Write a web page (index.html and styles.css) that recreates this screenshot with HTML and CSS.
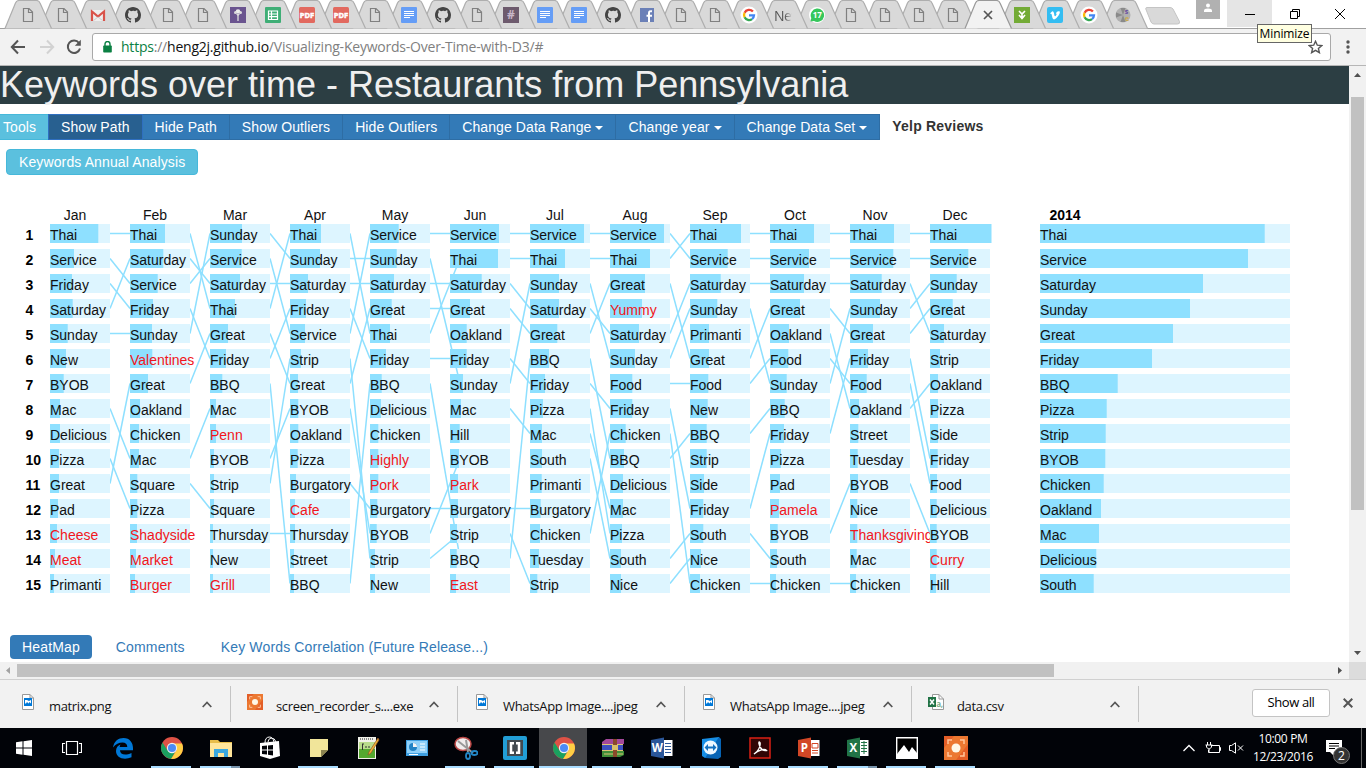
FILE: index.html
```html
<!DOCTYPE html>
<html lang="en">
<head>
<meta charset="utf-8">
<title>Keywords over time</title>
<link rel="stylesheet" href="styles.css">
</head>
<body>
<div class="tabstrip">
  <div class="tabs" id="tabs"></div>
  <svg class="newtab" width="36" height="18" viewBox="0 0 36 18"><path d="M2 .5H25Q27 .5 28 2L34.5 14.500Q35 17 32.500 17H9Q7 17 6 15L.8 2Q.5.5 2 .5Z" fill="#d9d9d9" stroke="#c4c4c4"/></svg>
  <div class="profile"><svg width="10" height="10" viewBox="0 0 10 10" fill="#fff"><circle cx="5" cy="2.500" r="2"/><path d="M1 9V7.500Q1 5.500 5 5.500T9 7.500V9Z"/></svg></div>
  <div class="winbtn min"><svg width="10" height="12" viewBox="0 0 10 12"><path d="M0 6.500H10" stroke="#000"/></svg></div>
  <div class="winbtn"><svg width="10" height="10" viewBox="0 0 10 10" fill="none" stroke="#000"><path d="M.5 2.500H7.500V9.500H.5ZM2.500 2.500V.5H9.500V7.500H7.500"/></svg></div>
  <div class="winbtn"><svg width="10" height="10" viewBox="0 0 10 10" stroke="#000"><path d="M0 0L10 10M10 0L0 10"/></svg></div>
</div>
<div class="toolbar">
  <svg class="back" width="16" height="16" viewBox="0 0 16 16" fill="none" stroke="#555" stroke-width="2"><path d="M15 8H2M8 1.500L1.800 8L8 14.500"/></svg>
  <svg class="fwd" width="16" height="16" viewBox="0 0 16 16" fill="none" stroke="#d2d2d2" stroke-width="2"><path d="M1 8H14M8 1.500L14.200 8L8 14.500"/></svg>
  <svg class="reload" width="16" height="16" viewBox="0 0 16 16" fill="none" stroke="#555" stroke-width="2"><path d="M13 4A6.200 6.200 0 1 0 14 9.500"/><path d="M14.800 .8V6.800H8.800Z" fill="#555" stroke="none"/></svg>
  <div class="omnibox">
    <svg class="lock" width="9" height="12" viewBox="0 0 9 12"><path d="M2 5V3A2.500 2.500 0 0 1 7 3V5" fill="none" stroke="#0b8043" stroke-width="1.400"/><rect x=".2" y="4.500" width="8.600" height="7" rx=".8" fill="#0b8043"/></svg>
    <span class="url"><span class="scheme">https</span>://<span class="host">heng2j.github.io</span>/Visualizing-Keywords-Over-Time-with-D3/#</span>
    <svg class="star" width="15" height="14" viewBox="0 0 15 14"><path d="M7.500 1.300L9.300 5.200L13.700 5.600L10.400 8.400L11.400 12.700L7.500 10.400L3.600 12.700L4.600 8.400L1.300 5.600L5.700 5.200Z" fill="none" stroke="#555" stroke-width="1.400"/></svg>
  </div>
  <svg class="menu" width="4" height="14" viewBox="0 0 4 14" fill="#555"><circle cx="2" cy="2" r="1.700"/><circle cx="2" cy="7" r="1.700"/><circle cx="2" cy="12" r="1.700"/></svg>
  <div class="tooltip">Minimize</div>
</div>
<div class="viewport">
  <div class="page">
    <h1>Keywords over time - Restaurants from Pennsylvania</h1>
    <div class="tools">
      <span class="btn info first">Tools</span><span class="btn active">Show Path</span><span class="btn">Hide Path</span><span class="btn">Show Outliers</span><span class="btn">Hide Outliers</span><span class="btn">Change Data Range<i class="caret"></i></span><span class="btn">Change year<i class="caret"></i></span><span class="btn">Change Data Set<i class="caret"></i></span>
      <b class="dataset">Yelp Reviews</b>
    </div>
    <div class="btn info annual">Keywords Annual Analysis</div>
    <svg class="chart" id="chart" width="1349" height="420"></svg>
    <div class="nav"><span class="pill">HeatMap</span><span>Comments</span><span>Key Words Correlation (Future Release...)</span></div>
  </div>
  <div class="vscroll"><svg width="17" height="17"><path d="M5 11L8.500 7L12 11Z" fill="#505050"/></svg><div class="vthumb"></div><svg width="17" height="17"><path d="M5 6L8.500 10L12 6Z" fill="#505050"/></svg></div>
  <div class="hscroll"><svg width="17" height="17"><path d="M10 5L6 8.500L10 12Z" fill="#a3a3a3"/></svg><div class="hthumb"></div><svg width="17" height="17"><path d="M6 5L10 8.500L6 12Z" fill="#505050"/></svg></div>
  <div class="corner"></div>
</div>
<div class="downloads" id="downloads"></div>
<div class="taskbar">
  <div class="apps" id="apps"></div>
  <div class="tray">
    <svg width="12" height="8" viewBox="0 0 12 8" fill="none" stroke="#fff" stroke-width="1.300"><path d="M.5 7L6 1.500L11.500 7"/></svg>
    <svg class="battery" width="16" height="12" viewBox="0 0 16 12" fill="none" stroke="#fff"><path d="M7 3.500H14.500V10.500H3.500V8M14.500 5.500H15.500V8.500H14.500M2.500 0V3M5.500 0V3M.5 3H7.500M1.500 3V5Q4 9 6.500 5V3M4 7V10"/></svg>
    <svg class="speaker" width="15" height="12" viewBox="0 0 15 12" fill="none" stroke="#fff"><path d="M.5 3.500H2.500L6.500 .8V11.200L2.500 8.500H.5Z"/><path d="M9 3.500L14 8.500M14 3.500L9 8.500"/></svg>
    <div class="clock"><span>10:00 PM</span><span>12/23/2016</span></div>
    <div class="action"><svg width="17" height="16" viewBox="0 0 17 16"><path d="M0 0H16V12H8V16L4 12H0Z" fill="#fff"/><path d="M3 3.500H13M3 6H13M3 8.500H9" stroke="#000"/></svg><span class="badge">2</span></div>
    <div class="desk"></div>
  </div>
</div>
<script src="app.js"></script>
</body>
</html>
```
FILE: styles.css
```css
*{box-sizing:border-box}
body{margin:0;width:1366px;height:768px;overflow:hidden;background:#fff;font-family:"Liberation Sans",Arial,sans-serif;font-size:14px;display:flex;flex-direction:column}
svg{display:block;flex:none}
.tabstrip{height:28px;display:flex;background:#fff}
.tabs{display:flex;padding-left:10px}
.tab{width:34px;height:28px;position:relative;display:flex;align-items:center;justify-content:center;padding-top:2px}
.tab.wide{width:35px}
.tab.active{width:36px}
.tab.after{width:32px}
.tab .shape{position:absolute;left:-6px;top:0;overflow:visible}
.tab .icon{position:relative}
.tabtext{position:relative;width:18px;overflow:hidden;font:14px "Open Sans",sans-serif;color:#555;letter-spacing:-.6px;-webkit-mask-image:linear-gradient(90deg,#000 60%,transparent)}
.newtab{margin:7px 0 0 5px}
.profile{width:24px;height:19px;background:#b1b1b1;margin-left:15px;display:flex;justify-content:center;padding-top:3px}
.winbtn{width:45px;height:27px;display:flex;align-items:center;justify-content:center}
.winbtn.min{margin-left:7px;background:#e5e5e5}
.winbtn:last-child{width:46px}
.toolbar{height:38px;background:#f2f2f2;border-top:1px solid #a0a0a0;border-bottom:1px solid #b6b6b6;display:flex;align-items:center;position:relative}
.back{margin-left:10px}
.fwd{margin-left:13px}
.reload{margin-left:11px}
.omnibox{width:1239px;height:28px;margin-left:10px;background:#fff;border:1px solid #a9a9a9;border-radius:3px;display:flex;align-items:center}
.lock{margin-left:10px}
.url{margin-left:9px;margin-top:-1px;font:14px "Open Sans",sans-serif;color:#808080;white-space:nowrap;letter-spacing:-.22px}
.scheme{color:#0b8043}
.host{color:#111}
.star{margin-left:auto;margin-right:7px}
.menu{margin-left:15px}
.tooltip{position:absolute;left:1257px;top:-5px;width:55px;height:19px;border:1px solid #666;background:#ffffe1;font:12px/17px "Open Sans",sans-serif;letter-spacing:-.1px;text-align:center;color:#000}
.viewport{height:613px;display:grid;grid-template-columns:1349px 17px;grid-template-rows:596px 17px}
.page{overflow:hidden;background:#fff}
h1{margin:0;height:38px;background:#2c3e43;color:#efefef;font-size:36px;font-weight:400;line-height:38px;white-space:nowrap}
.tools{display:flex;margin-top:10px;height:26px}
.btn{height:26px;line-height:24px;padding:0 12px;border:1px solid #2e6da4;background:#337ab7;color:#fff;margin-left:-1px;white-space:nowrap;letter-spacing:.09px}
.btn.info{background:#5bc0de;border-color:#46b8da}
.btn.first{padding:0 11px 0 3px;margin-left:-1px;width:50px}
.btn.active{background:#286090;border-color:#2f6fc0;position:relative}
.caret{display:inline-block;border:4px solid transparent;border-top-color:#fff;border-bottom:0;margin-left:4px;vertical-align:2px}
.dataset{color:#333;margin-left:12px;line-height:24px;letter-spacing:.2px}
.btn.annual{display:inline-block;vertical-align:top;margin:9px 0 0 6px;border-radius:4px;letter-spacing:.12px}
.chart{font-size:14px;margin-top:24px}
.cell{fill:#ddf5ff}
.bar{fill:#8ee0ff}
.link{stroke:#8ee0ff;stroke-width:1.500}
.word,.month{fill:#111}
.month{text-anchor:middle}
.outlier{fill:#f11520}
.bold{font-weight:700;fill:#000}
.nav{display:flex;height:24px;line-height:24px;margin:16px 0 0 10px;color:#337ab7;letter-spacing:.15px}
.nav span{padding:0 12px}
.nav span+span{margin-left:12px}
.nav .pill{background:#337ab7;color:#fff;border-radius:4px}
.vscroll,.hscroll{background:#f1f1f1;display:flex;justify-content:space-between}
.vscroll{flex-direction:column}
.vthumb{width:13px;height:413px;margin:14px 0 auto 2px;background:#c1c1c1}
.hthumb{width:1037px;height:13px;margin:2px auto 0 0;background:#c1c1c1}
.corner{background:#dcdcdc}
.downloads{height:49px;border-top:1px solid #d0d0d0;background:#f2f2f2;display:flex;padding-top:6px}
.item{width:227px;height:36px;border-right:1px solid #c4c4c4;display:flex;padding:0 18px 0 16px;font:13px/18px "Open Sans",sans-serif;color:#111;letter-spacing:-.35px}
.item:first-child{width:231px;padding-left:20px}
.item .icon{margin-top:8px;width:16px}
.item .name{margin:11px auto 0 13px;white-space:nowrap}
.item .up{margin-top:15px}
.showall{margin:3px 0 0 113px;width:78px;height:28px;border:1px solid #c4c4c4;border-radius:3px;background:#fff;text-align:center;font:13px/25px "Open Sans",sans-serif;letter-spacing:-.4px}
.close{margin:12px 0 0 13px}
.taskbar{height:40px;background:#010308;display:flex;justify-content:space-between}
.apps{display:flex}
.app{width:49px;height:40px;display:flex;align-items:center;justify-content:center;position:relative}
.app.sys{width:48px}
.app.gap{margin-left:2px}
.app.current{background:linear-gradient(#47484b,#47484b) 0 0/48px 100% no-repeat}
.app.run::after{content:"";position:absolute;left:4px;bottom:0;width:40px;height:2px;background:#a9dcff}
.app.current::after{left:0;width:48px}
.app.multi::after{background:linear-gradient(90deg,#a9dcff 31px,#7894ac 31px)}
.tray{display:flex;align-items:center;color:#fff}
.battery{margin-left:10px}
.speaker{margin-left:8px}
.clock{width:76px;margin-left:1px;display:flex;flex-direction:column;align-items:center;font:12px/18px "Open Sans",sans-serif;letter-spacing:-.35px;white-space:nowrap;margin-top:-1px}
.action{width:30px;height:40px;margin-left:5px;position:relative;padding-top:12px}
.badge{position:absolute;left:7px;top:19px;width:17px;height:17px;border-radius:50%;background:#333;border:1px solid #777;font:12px/15px "Open Sans",sans-serif;text-align:center}
.desk{width:5px;height:40px;border-left:1px solid #666;margin-left:5px}
```
FILE: app.js
```javascript
const svg = (w, h, body, box) => `<svg class="icon" width="${w}" height="${h}" viewBox="${box || `0 0 ${w} ${h}`}">${body}</svg>`;
const label = (t, x, y, size, fill, extra = '') => `<text x="${x}" y="${y}" font-size="${size}" fill="${fill}" text-anchor="middle" font-weight="700" font-family="Open Sans,sans-serif" ${extra}>${t}</text>`;

const tabIcons = {
  page: svg(16, 16, '<path d="M3.500 1.500H9L12.500 5V14.500H3.500ZM8.500 1.500V5.500H12.500" fill="none" stroke="#808080" stroke-width="1.200"/>'),
  gmail: svg(16, 16, '<path d="M2 3H14V14H2Z" fill="#eee"/><path d="M2 14V4.500L8 9.500L14 4.500V14" fill="none" stroke="#d9534a" stroke-width="2.200"/><path d="M3.500 13.500L8 10L12.500 13.500" fill="none" stroke="#ccc"/>'),
  github: svg(16, 16, '<path fill="#444" d="M8 0C3.580 0 0 3.580 0 8c0 3.540 2.290 6.530 5.470 7.590.4.070.55-.17.55-.38 0-.19-.01-.82-.01-1.490-2.010.37-2.530-.49-2.690-.94-.09-.23-.48-.94-.82-1.130-.28-.15-.68-.52-.01-.53.63-.01 1.080.58 1.230.82.72 1.210 1.870.87 2.330.66.070-.52.28-.87.51-1.070-1.780-.2-3.640-.89-3.640-3.950 0-.87.31-1.590.82-2.150-.08-.2-.36-1.020.08-2.120 0 0 .67-.21 2.200.82A7.600 7.600 0 0 1 8 3.860c.68 0 1.360.09 2 .27 1.530-1.040 2.200-.82 2.200-.82.44 1.100.16 1.920.08 2.120.51.56.82 1.270.82 2.150 0 3.070-1.870 3.750-3.650 3.950.29.25.54.73.54 1.480 0 1.070-.01 1.930-.01 2.200 0 .21.15.46.55.38A8.010 8.010 0 0 0 16 8c0-4.420-3.580-8-8-8z"/>'),
  purple: svg(16, 16, '<path d="M0 0H16V16H0Z" fill="#6a548f"/><path d="M8 7V14" stroke="#ddd" stroke-width="1.300"/><circle cx="8" cy="4.500" r="2.300" fill="#eee"/><circle cx="5.500" cy="5.500" r="1.500" fill="#ddd"/><circle cx="10.500" cy="5.500" r="1.500" fill="#ddd"/><path d="M6 7H10L8 9Z" fill="#ddd"/>'),
  sheets: svg(16, 16, '<rect width="16" height="16" rx="1" fill="#3fae76"/><path d="M3.500 4H12.500V12.500H3.500ZM3.500 7H12.500M3.500 9.700H12.500M6.500 4V12.500" fill="none" stroke="#fff" stroke-width="1.200"/>'),
  pdf: svg(16, 16, '<rect width="16" height="16" rx="1.500" fill="#e2695f"/>' + label('PDF', 8, 11, 7.5, '#fff', 'stroke="#fff" stroke-width=".5"')),
  docs: svg(16, 16, '<rect width="16" height="16" rx="1" fill="#659df6"/><path d="M3 4.500H13M3 6.500H13M3 8.500H13M3 10.500H9" stroke="#fff"/>'),
  slack: svg(16, 16, '<path d="M0 0H16V16H0Z" fill="#6d5a6d"/>' + label('#', 8, 12, 12, '#c9b6c9')),
  fb: svg(16, 16, '<path d="M1 1H15V15H1Z" fill="#6b80b7"/><path d="M10 15V6Q10 3.800 13 4.200M7.500 8.800H13" fill="none" stroke="#fff" stroke-width="2"/>'),
  google: svg(18, 18, '<circle cx="9" cy="9" r="8.500" fill="#fff"/><g fill="none" stroke-width="2.300"><path d="M12.900 5.600A5 5 0 0 0 4.600 6.700" stroke="#ea4335"/><path d="M4.600 6.700A5 5 0 0 0 4.600 11.300" stroke="#fbbc05"/><path d="M4.600 11.300A5 5 0 0 0 12 13.100" stroke="#34a853"/><path d="M12 13.100A5 5 0 0 0 14 9.300H9" stroke="#4285f4"/></g>'),
  text: '<span class="tabtext">New</span>',
  whatsapp: svg(16, 16, '<circle cx="8" cy="8" r="8" fill="#fff"/><path d="M1.500 14.500L2.300 11A6.700 6.700 0 1 1 5 14Z" fill="#36c75c"/>' + label('17', 8.3, 11, 8, '#fff')),
  close: svg(16, 16, '<path d="M4 4L12 12M12 4L4 12" stroke="#555" stroke-width="1.700"/>'),
  green: svg(16, 16, '<path d="M0 0H16V16H0Z" fill="#73ab36"/><path d="M5 4L8 7L11 4M5 8L8 11.500L11 8M8 7.500V11" fill="none" stroke="#fff" stroke-width="1.600"/>'),
  vimeo: svg(16, 16, '<rect width="16" height="16" rx="2" fill="#34bdf2"/><path d="M3 6.500L5 4.500Q6.800 3.700 7.300 8Q7.800 10.500 9.300 8Q10.300 6.300 8.800 6.500Q10 3.500 12.500 4.300Q14 6 9.500 11Q6.500 13.800 5.500 11L4.500 7Z" fill="#fff"/>'),
  globe: svg(16, 16, '<circle cx="8" cy="8" r="7.500" fill="#b0b0b0"/><path d="M8 8L1 5.500V10.500ZM8 8L5.500 1H10.500ZM8 8L5.500 15H10.500Z" fill="#8a8a8a"/>' + label('s', 11.5, 6.5, 7, '#654aa0') + label('e', 12, 14, 7, '#c9a94f'))
};
const tabs = 'page page gmail github page page purple sheets pdf pdf page docs github page slack docs docs github fb page page google text whatsapp page page page page close green vimeo google globe'.split(' ');
document.getElementById('tabs').innerHTML = tabs.map((t, i) => {
  const active = t === 'close';
  const cls = active ? 'active' : i === 29 ? 'after' : i < 8 ? 'wide' : '';
  const x = i === 29 ? -2 : 0;
  return `<div class="tab ${cls}" style="z-index:${active ? 90 : 60 - i}"><svg class="shape" width="48" height="28"><path transform="translate(${x})" d="M1 28.500L11.500 3Q12.500.5 15 .5H32.500Q35 .5 36 3L47.500 28.500" fill="${active ? '#f2f2f2' : '#d9d9d9'}" stroke="${active ? '#999' : '#aeaeae'}" stroke-width="1.200"/></svg>${tabIcons[t]}</div>`;
}).join('');

/* keyword:width pairs per month; a leading * marks an outlier */
const months = {
  Jan: 'Thai:48.3 Service:24 Friday:22 Saturday:22.7 Sunday:17.7 New:16 BYOB:13.7 Mac:10 Delicious:10 Pizza:9 Great:9 Pad:8 *Cheese:7 *Meat:5 Primanti:4',
  Feb: 'Thai:35 Saturday:33.3 Service:27.7 Friday:23 Sunday:22 *Valentines:22.3 Great:18 Oakland:10 Chicken:9 Mac:9 Square:7.3 Pizza:7.3 *Shadyside:7 *Market:6 *Burger:5',
  Mar: 'Sunday:32 Service:31.7 Saturday:30 Thai:25 Great:18 Friday:16 BBQ:12.3 Mac:6 *Penn:6 BYOB:4 Strip:4 Square:4 Thursday:3 New:3 *Grill:3',
  Apr: 'Thai:31 Sunday:30 Saturday:18 Friday:16 Service:15 Strip:11 Great:8 BYOB:8.3 Oakland:8.3 Pizza:7.7 Burgatory:6 *Cafe:5 Thursday:5 Street:4 BBQ:4',
  May: 'Service:28.7 Sunday:26.7 Saturday:24 Great:21.7 Thai:20 Friday:16 BBQ:11.7 Delicious:11 Chicken:8.3 *Highly:8.3 *Pork:8.3 Burgatory:7.3 BYOB:6.7 Strip:5 New:5',
  Jun: 'Service:49 Thai:48 Saturday:31.7 Great:20 Oakland:16.7 Friday:16.7 Sunday:13 Mac:11 Hill:9.7 BYOB:9 *Park:8 Burgatory:8 Strip:7 BBQ:6.7 *East:6',
  Jul: 'Service:54 Thai:35 Sunday:29 Saturday:29 Great:27.3 BBQ:19 Friday:15 Pizza:13 Mac:12 South:12 Primanti:11.7 Burgatory:10.7 Chicken:10 Tuesday:9 Strip:7.3',
  Aug: 'Service:54 Thai:40 Great:35 *Yummy:32 Saturday:29 Sunday:25 Food:22.3 Friday:22.3 Chicken:15.7 BBQ:14 Delicious:13 Mac:13 Pizza:12 South:11 Nice:11',
  Sep: 'Thai:51 Service:37.7 Saturday:30.7 Sunday:27.3 Primanti:19 Great:19 Food:18.3 New:17.7 BBQ:16.7 Strip:16.7 Side:14 Friday:13.3 South:13.3 Nice:11 Chicken:10',
  Oct: 'Thai:44 Service:39 Saturday:34 Great:30 Oakland:19 Food:18.3 Sunday:16.7 BBQ:14.7 Friday:14 Pizza:11 Pad:10 *Pamela:9 BYOB:7.7 South:7 Chicken:6',
  Nov: 'Thai:44 Service:43.3 Saturday:31.7 Sunday:30 Great:23 Friday:18 Food:16.7 Oakland:9 Street:8.3 Tuesday:7.7 BYOB:8 Nice:7.3 *Thanksgiving:7.3 Mac:6.7 Chicken:6',
  Dec: 'Thai:61.5 Service:38.3 Sunday:26.7 Great:22.7 Saturday:14 Strip:10 Oakland:8 Pizza:8 Side:8 Friday:7.7 Food:7 Delicious:6.7 BYOB:6.7 *Curry:6.7 Hill:6'
};
const year = 'Thai:224.7 Service:208 Saturday:163 Sunday:150 Great:133 Friday:112 BBQ:77.7 Pizza:66.7 Strip:65.7 BYOB:65.3 Chicken:63.7 Oakland:61 Mac:59 Delicious:56.3 South:53.7';
const parse = s => s.split(' ').map(p => { const [w, n] = p.split(':'); return { word: w.replace('*', ''), out: w[0] === '*', n: +n }; });
const top0 = 25, step = 25;
const column = (rows, x, full) => rows.map((r, i) => {
  const y = top0 + i * step;
  return `<rect class="cell" x="${x}" y="${y}" width="${full}" height="19"/><rect class="bar" x="${x}" y="${y}" width="${r.n}" height="19"/><text class="word ${r.out ? 'outlier' : ''}" x="${x}" y="${y + 16}">${r.word}</text>`;
}).join('');
const names = Object.keys(months), cols = names.map(n => parse(months[n]));
let links = '', cells = '';
cols.forEach((rows, c) => {
  const x = 50 + c * 80;
  if (cols[c + 1]) rows.forEach((r, i) => {
    const j = cols[c + 1].findIndex(q => q.word === r.word);
    if (j >= 0) links += `<line class="link" x1="${x + 60}" y1="${top0 + i * step + 9.5}" x2="${x + (c === 4 ? 90 : 80)}" y2="${top0 + j * step + 9.5}"/>`;
  });
  cells += `<text class="month" x="${x + 25}" y="21">${names[c]}</text>` + column(rows, x, 60);
});
const ranks = cols[0].map((_, i) => `<text class="bold" x="25.500" y="${top0 + i * step + 16}">${i + 1}</text>`).join('');
document.getElementById('chart').innerHTML = links + ranks + cells + '<text class="month bold" x="1065" y="21">2014</text>' + column(parse(year), 1040, 250);

const image = svg(16, 16, '<path d="M2.500.5H10L13.500 4V15.500H2.500Z" fill="#fff" stroke="#999"/><path d="M10 .5V4H13.500" fill="none" stroke="#999"/><path d="M4 4H12V12H4Z" fill="#0078d7"/><path d="M5 6V9.500H6L7 8L8.500 9.500L9.500 8L11 9.500V6L9 7L7 6Z" fill="#fff"/>');
const recBody = '<path d="M0 0H24V24H0Z" fill="#ec7831"/><path d="M12 24L24 8V24ZM0 0H10L0 12Z" fill="#e35e27"/><path d="M4 8V4H8M16 4H20V8M20 16V20H16M8 20H4V16" fill="none" stroke="#ffc59a" stroke-width="1.500"/><circle cx="12" cy="12" r="4.500" fill="#fff8e7"/>';
const csv = svg(16, 16, '<path d="M4.500.5H11L15.500 5V15.500H4.500Z" fill="#fff" stroke="#999"/><path d="M11 .5V5H15.500" fill="none" stroke="#999"/><path d="M0 3H8V13H0Z" fill="#217346"/><path d="M2 5.500L6 10.500M6 5.500L2 10.500" stroke="#fff" stroke-width="1.500"/>' + label('a,', 11.5, 13, 8, '#7bb08e'));
const files = [[image, 'matrix.png'], [svg(16, 16, recBody, '0 0 24 24'), 'screen_recorder_s....exe'], [image, 'WhatsApp Image....jpeg'], [image, 'WhatsApp Image....jpeg'], [csv, 'data.csv']];
document.getElementById('downloads').innerHTML = files.map(([i, n]) => `<div class="item">${i}<span class="name">${n}</span><svg class="up" width="10" height="7" viewBox="0 0 10 7"><path d="M.7 6L5 1.500L9.300 6" fill="none" stroke="#555" stroke-width="1.700"/></svg></div>`).join('') +
  '<div class="showall">Show all</div><svg class="close" width="10" height="10" viewBox="0 0 10 10"><path d="M.7.7L9.300 9.300M9.300.7L.7 9.300" stroke="#555" stroke-width="2"/></svg>';

const chrome = svg(22, 22, '<circle cx="12" cy="12" r="12" fill="#de5246"/><path d="M1.600 6A12 12 0 0 0 11 23.900L16.500 14.500L7 14.500Z" fill="#1aa15f"/><path d="M12 7H22.900A12 12 0 0 1 11 23.900L17 14.500Z" fill="#ffce44"/><circle cx="12" cy="12" r="5.600" fill="#f1f1f1"/><circle cx="12" cy="12" r="4.400" fill="#4c8bf5"/>', '0 0 24 24');
const office = (c, l, page) => svg(24, 24, `<path d="M12 4H22.500V20H12Z" fill="#fff"/><path d="${page}" fill="none" stroke="${c}"/><path d="M1 4L14 1.500V22.500L1 20Z" fill="${c}"/>` + label(l, 7.3, 16, 11.5, '#fff'));
const apps = [
  ['sys', svg(16, 16, '<path d="M0 2.200L6.500 1.300V7.500H0ZM7.500 1.200L16 0V7.500H7.500ZM0 8.500H6.500V14.700L0 13.800ZM7.500 8.500H16V16L7.500 14.800Z" fill="#fff"/>')],
  ['sys', svg(20, 14, '<path d="M4.500.5H15.500V13.500H4.500ZM3 2.500H.5V11.500H3M17 2.500H19.500V11.500H17" fill="none" stroke="#fff" stroke-width="1.200"/>')],
  ['gap', svg(22, 22, '<path fill="#0078d7" d="M1 10.500C2 4 6.500 1 11.500 1C18 1 21 6 21 11V13.200H8C8 17.500 13 19 19.500 16V20.300C12 23.500 4 21 4 14C4 10.500 6 8.500 8.500 7.500C8 8.500 7.700 9.300 7.700 10H15.300C15.300 7 13.500 5.500 10.500 5.500C7 5.500 3.500 7 1 10.500Z"/>')],
  ['run', chrome],
  ['run multi', svg(22, 20, '<path d="M0 2H8L10 4H22V19H0Z" fill="#e8bd4b"/><path d="M0 5H22V19H0Z" fill="#ffe59a"/><path d="M4 19V11H18V19H14V15H8V19Z" fill="#3ba8df"/>')],
  ['', svg(22, 24, '<path d="M1 7L20 5L21 20L11 23L1 20Z" fill="#fff"/><path d="M6 7Q6 1 10.500 1Q14 1 15 6M9 6Q9 3 12 2Q16 2 17 6" fill="none" stroke="#fff"/><path d="M3 10L8 9.500V13.500H3ZM9 9.500L14 9V13.500H9ZM3 14.500H8V18.500L3 18ZM9 14.500H14V19.500L9 18.700Z" fill="#010308"/>')],
  ['run', svg(18, 18, '<path d="M0 0H18V11L11 18H0Z" fill="#f1e59a"/><path d="M18 11L11 18V11Z" fill="#8b8450"/>')],
  ['', svg(24, 24, '<path d="M2 1H20V23H2Z" fill="#f2f2ea"/><path d="M3 6H19V22H3Z" fill="#b9dc8c"/><path d="M3 13H19V22H3Z" fill="#54a92f"/><path d="M4 3H18" stroke="#888" stroke-width="2" stroke-dasharray="1"/><path d="M6.500 8V14M8 8H6M9 11H11M12 11H14" stroke="#333"/><path d="M22 2L13 16L12 19L15 17L23 4Z" fill="#efb535" stroke="#94532a" stroke-width=".7"/>')],
  ['', svg(22, 18, '<path d="M0 1H22V17H0Z" fill="#3f9fe0"/><path d="M1 2H21V14H1Z" fill="#8fd0f8"/><circle cx="7" cy="8" r="4" fill="#2383c4"/><path d="M7 8V4A4 4 0 0 1 11 8Z" fill="#f4f4f4"/><path d="M14 5H19M14 8H19M14 11H19M3 15.500H12" stroke="#fff" stroke-width="1.200"/>')],
  ['run', svg(24, 24, '<ellipse cx="9" cy="8" rx="8" ry="6.500" fill="#f1eded" stroke="#b94745" stroke-width="1.500"/><path d="M4 5L19 17M12 4L14 16" stroke="#999" stroke-width="2"/><g fill="none" stroke="#2287c7" stroke-width="1.800"><ellipse cx="14" cy="20" rx="2" ry="3"/><ellipse cx="20.500" cy="17" rx="3" ry="2"/></g>')],
  ['run', svg(24, 24, '<rect width="24" height="24" rx="2" fill="#229ed6"/><rect x="4" y="4" width="16" height="16" fill="#424a50"/><path d="M11 7.200H8V16.800H11M13 7.200H16V16.800H13" fill="none" stroke="#fff" stroke-width="2.500"/>')],
  ['run current', chrome],
  ['run', svg(24, 20, '<path d="M1 4L5 1H23V6H1Z" fill="#a3489a"/><path d="M1 7H22V12H1Z" fill="#3c4fc0"/><path d="M1 13H23V17L19 19H1Z" fill="#3f8f39"/><path d="M1 6.500H22M1 12.500H22M3 16H22" stroke="#dcc477"/><path d="M12 1H16V19H12Z" fill="#8a4a2b"/><path d="M11 7H17V12H11Z" fill="#d9c06a"/>')],
  ['run', office('#2b579a', 'W', 'M15 7.500H21M15 10.500H21M15 13.500H21M15 16.500H21')],
  ['run', svg(22, 24, '<path d="M2 3L19 1L20 20L5 22L2 20Z" fill="#178ee5"/><path d="M19 1L21 3V21L18 23L5 22Z" fill="#0764b5"/><circle cx="10.500" cy="11.500" r="7" fill="#eef8ff"/><path d="M4.500 11.500L8 8V10.500H13V8L16.500 11.500L13 15V12.500H8V15Z" fill="#1571bf"/>')],
  ['run', svg(22, 22, '<path d="M1 1H21V21H1Z" fill="#300505" stroke="#d92014" stroke-width="1.500"/><path d="M5 17C9 15 12 9 11 5.500Q10 4 9.800 6C11 12 14 14 17.500 13.500C16 11.500 10 12.500 5 17Z" fill="none" stroke="#fff" stroke-width="1.300"/>')],
  ['run', office('#d24726', 'P', 'M15 7.500H21V12H15ZM15 14.500H21M15 17H21')],
  ['run multi', office('#217346', 'X', 'M15 6.500H21M15 9.500H21M15 12.500H21M15 15.500H21M18 5V18')],
  ['run', svg(22, 22, '<path d="M.7.7H21.300V21.300H.7Z" stroke="#fff" stroke-width="1.400"/><path d="M1 17L8 8L13 15L16 10L21 16V21H1Z" fill="#fff"/>')],
  ['run', svg(24, 24, recBody)]
];
document.getElementById('apps').innerHTML = apps.map(([c, i]) => `<div class="app ${c}">${i}</div>`).join('');
```
